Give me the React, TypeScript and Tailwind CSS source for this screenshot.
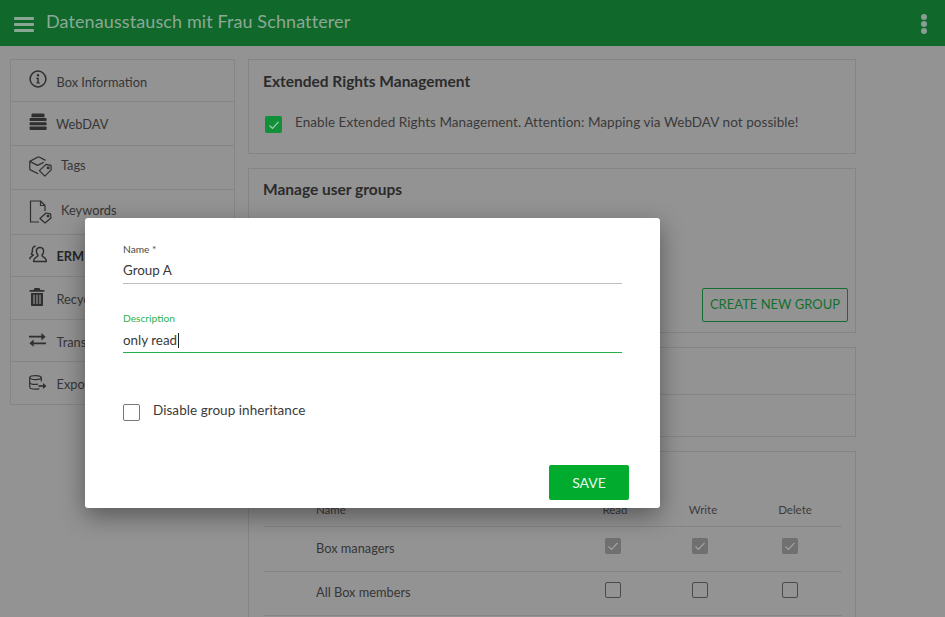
import React from "react";

const ink = "#2f2f2f";

function InfoIcon() {
  return (
    <svg width="18" height="18" viewBox="0 0 18 18" fill="none">
      <circle cx="9" cy="9" r="7.9" stroke={ink} strokeWidth="1.5" />
      <circle cx="9" cy="5.3" r="1.2" fill={ink} />
      <path d="M7.3 7.8H9.8V12.4H11V13.5H7.2V12.4H8.3V8.9H7.3Z" fill={ink} />
    </svg>
  );
}
function StackIcon() {
  return (
    <svg width="18" height="18" viewBox="0 0 18 18" fill={ink}>
      <path d="M2.5 1.6Q2.5 .4 4 .4H14Q15.5 .4 15.5 1.6V4.2H2.5Z" />
      <rect x="0.6" y="5" width="17" height="3" rx=".8" />
      <rect x="0.6" y="9.2" width="17" height="3" rx=".8" />
      <rect x="0.6" y="13.4" width="17" height="3.6" rx=".8" />
    </svg>
  );
}
function TagsIcon() {
  return (
    <svg width="23" height="21" viewBox="0 0 23 21" fill="none" stroke={ink} strokeWidth="1.2" strokeLinejoin="round">
      <path d="M9.5 .8L.8 5.4V13.6L9.2 17.8" />
      <path d="M.8 5.4L8.6 9.4L14.8 6.2" />
      <path d="M9.5 .8L16.6 4.4" />
      <path d="M10.4 14.6L17 8.4L22 9.4L22.2 13.8L15.8 20.2Z" />
      <circle cx="19.2" cy="11.8" r=".9" />
    </svg>
  );
}
function DocTagIcon() {
  return (
    <svg width="23" height="24" viewBox="0 0 23 24" fill="none" stroke={ink} strokeWidth="1.2" strokeLinejoin="round">
      <path d="M10 22H1.5V1H11.5L16 5.5V11" />
      <path d="M11.5 1V5.5H16" />
      <path d="M11 18.5L17 13L21.5 13.8L22 18L16 23Z" />
      <circle cx="19" cy="16" r=".9" />
    </svg>
  );
}
function PeopleIcon() {
  return (
    <svg width="18" height="18" viewBox="0 0 19 18" fill="none" stroke={ink} strokeWidth="1.5" strokeLinejoin="round">
      <path d="M7 .9C4.6.9 3.6 2.6 3.6 4.8C3.6 7 3.2 8.2 2.5 9.2L4.6 10.2C3 11 1.2 12 .8 14.5" />
      <path d="M11.6 2.2C9.2 2.2 7.8 4 7.8 6.2C7.8 8 8.6 9.4 9.5 10.2C9.5 11.2 8.8 11.8 7.6 12.4C6.2 13.1 5 14.2 4.8 17H18.4C18.2 14.2 17 13.1 15.6 12.4C14.4 11.8 13.7 11.2 13.7 10.2C14.6 9.4 15.4 8 15.4 6.2C15.4 4 14 2.2 11.6 2.2Z" />
    </svg>
  );
}
function TrashIcon() {
  return (
    <svg width="16" height="18" viewBox="0 0 16 18" fill={ink}>
      <path d="M5.6 0H10.4L11.4 2H15.4V3.8H.6V2H4.6Z" />
      <path d="M2 5H14V17C14 17.6 13.6 18 13 18H3C2.4 18 2 17.6 2 17ZM4.4 6.8V16H5.6V6.8ZM7.4 6.8V16H8.6V6.8ZM10.4 6.8V16H11.6V6.8Z" fillRule="evenodd" />
    </svg>
  );
}
function SwapIcon() {
  return (
    <svg width="17" height="14" viewBox="0 0 17 14" fill={ink}>
      <path d="M0 3.4H12.4V.6L16.6 4.4L12.4 8V5.2H0Z" transform="translate(0 -.6)" />
      <path d="M17 10.6H4.6V7.8L.4 11.4L4.6 15V12.4H17Z" transform="translate(0 -1.2)" />
    </svg>
  );
}
function DbExportIcon() {
  return (
    <svg width="18" height="15" viewBox="0 0 18 15" fill="none" stroke={ink} strokeWidth="1.2">
      <ellipse cx="6.5" cy="2.6" rx="5.8" ry="2" />
      <path d="M.7 2.6V12C.7 13.2 3.2 14.2 6.5 14.2C8 14.2 9.4 14 10.4 13.6" />
      <path d="M.7 7.2C.7 8.4 3.2 9.4 6.5 9.4C7.4 9.4 8.2 9.3 9 9.2" />
      <path d="M12.3 2.6V6.5" />
      <path d="M9.5 11H16.5" strokeWidth="1.6" />
      <path d="M14 8L17.3 11L14 14Z" fill={ink} stroke="none" />
    </svg>
  );
}

function SideRow({ icon, label, bold, iconClass, labelClass, rowClass }: { icon: React.ReactNode; label: string; bold?: boolean; iconClass: string; labelClass: string; rowClass: string }) {
  return (
    <div className={`flex border-b border-[#858585] last:border-b-0 pl-[18px] ${rowClass}`}>
      <div className={iconClass}>{icon}</div>
      <span className={`${labelClass} text-[12.8px] leading-[18px] ${bold ? "font-bold text-[#262626]" : "text-[#363636]"}`}>{label}</span>
    </div>
  );
}

function Check({ checked }: { checked?: boolean }) {
  return checked ? (
    <span className="mb-[6px] flex h-4 w-4 items-center justify-center rounded-[2px] bg-[#707070]">
      <svg width="12" height="12" viewBox="0 0 12 12" fill="none" stroke="#a3a3a3" strokeWidth="1.2"><path d="M1.5 6.5L4.5 9.5L10.5 2.8" /></svg>
    </span>
  ) : (
    <span className="mb-[6px] block h-4 w-4 rounded-[2px] border border-[#4a4a4a]" />
  );
}

function TableRow({ name, checked }: { name: string; checked?: boolean }) {
  return (
    <div className="grid h-[44.5px] grid-cols-[304px_90px_84px_100px] items-center border-b border-[#858585] text-[12.8px] text-[#363636]">
      <span className="pl-[52px] pb-[1px]">{name}</span>
      <span className="flex justify-center"><Check checked={checked} /></span>
      <span className="flex justify-center"><Check checked={checked} /></span>
      <span className="flex justify-center pr-[4px]"><Check checked={checked} /></span>
    </div>
  );
}

export default function App() {
  return (
    <div className="relative h-[617px] w-[945px] overflow-hidden bg-[#939393] font-['Lato','Noto_Sans',sans-serif]">
      <header className="flex h-[45.5px] items-center bg-[#10682b] pl-[14px] pr-[18px]">
        <div className="flex w-[20px] flex-col gap-[3px] pt-[3px]">
          <span className="h-[3px] rounded-[1px] bg-[#8aa796]" />
          <span className="h-[3px] rounded-[1px] bg-[#8aa796]" />
          <span className="h-[3px] rounded-[1px] bg-[#8aa796]" />
        </div>
        <h1 className="ml-[12px] pb-[2px] text-[18px] font-normal tracking-[0.1px] text-[#8ca896]">Datenausstausch mit Frau Schnatterer</h1>
        <div className="ml-auto flex flex-col gap-[1px] pt-[3px]">
          <span className="h-[6px] w-[6px] rounded-full bg-[#8b9d92]" />
          <span className="h-[6px] w-[6px] rounded-full bg-[#8b9d92]" />
          <span className="h-[6px] w-[6px] rounded-full bg-[#8b9d92]" />
        </div>
      </header>

      <main className="flex items-start gap-[13px] pl-[10px] pt-[13.5px]">
        <nav className="w-[225px] border border-[#858585]">
          <SideRow rowClass="h-[42px]" iconClass="pt-[10px]" labelClass="ml-[9.5px] pt-[13px]" icon={<InfoIcon />} label="Box Information" />
          <SideRow rowClass="h-[44px]" iconClass="pt-[11px]" labelClass="ml-[9px] pt-[13px]" icon={<StackIcon />} label="WebDAV" />
          <SideRow rowClass="h-[44px]" iconClass="pt-[10px]" labelClass="ml-[9px] pt-[10px]" icon={<TagsIcon />} label="Tags" />
          <SideRow rowClass="h-[45px]" iconClass="pt-[10px]" labelClass="ml-[9px] pt-[11px]" icon={<DocTagIcon />} label="Keywords" />
          <SideRow rowClass="h-[42px]" iconClass="pt-[10px]" labelClass="ml-[9.5px] pt-[12px]" icon={<PeopleIcon />} label="ERM" bold />
          <SideRow rowClass="h-[43px]" iconClass="pt-[11px]" labelClass="ml-[11.5px] pt-[13px]" icon={<TrashIcon />} label="Recycle bin" />
          <SideRow rowClass="h-[42px]" iconClass="pt-[13px]" labelClass="ml-[10.5px] pt-[13px]" icon={<SwapIcon />} label="Transfer" />
          <SideRow rowClass="h-[42px]" iconClass="pt-[13px]" labelClass="ml-[9.5px] pt-[13px]" icon={<DbExportIcon />} label="Export" />
        </nav>

        <section className="flex w-[608px] flex-col gap-[14px]">
          <div className="h-[95px] border border-[#858585] px-[14px] pt-[11px]">
            <h2 className="text-[15.5px] font-bold leading-[20px] text-[#2b2b2b]">Extended Rights Management</h2>
            <div className="mt-[14px] flex">
              <span className="ml-[2px] mt-[11px] flex h-[17px] w-[17px] items-center justify-center rounded-[2px] bg-[#109038]">
                <svg width="12" height="12" viewBox="0 0 12 12" fill="none" stroke="#a9c9b2" strokeWidth="1.2"><path d="M1.5 6.5L4.5 9.5L10.5 2.8" /></svg>
              </span>
              <span className="ml-[13px] mt-[8px] text-[13.5px] leading-[18px] tracking-[0.06px] text-[#3a3a3a]">Enable Extended Rights Management. Attention: Mapping via WebDAV not possible!</span>
            </div>
          </div>

          <div className="flex h-[165px] flex-col border border-[#858585] px-[14px] pt-[10px]">
            <h2 className="text-[15.5px] font-bold leading-[20px] text-[#2b2b2b]">Manage user groups</h2>
            <button className="ml-auto mr-[-7px] mt-[89px] flex h-[34px] w-[146px] items-center justify-center rounded-[2px] border border-[#136f30] text-[13px] text-[#136f30]">CREATE NEW GROUP</button>
          </div>

          <div className="h-[90px] border border-[#858585]">
            <div className="h-[47px] border-b border-[#858585]" />
          </div>

          <div className="h-[200px] border border-[#858585] pl-[15px] pr-[13px] pt-[50px]">
            <div className="grid h-[25px] grid-cols-[304px_90px_84px_100px] items-start border-b border-[#858585] text-[11.5px] leading-[16px] text-[#3c3c3c]">
              <span className="pl-[52px]">Name</span>
              <span className="pl-[4px] text-center">Read</span>
              <span className="pl-[6px] text-center">Write</span>
              <span className="pl-[6px] text-center">Delete</span>
            </div>
            <TableRow name="Box managers" checked />
            <TableRow name="All Box members" />
          </div>
        </section>
      </main>

      <div className="absolute left-[85px] top-[218px] flex h-[290px] w-[575px] flex-col rounded-[3px] bg-white px-[38px] shadow-[0_8px_24px_rgba(0,0,0,0.4)]">
        <label className="mt-[25px] text-[10.2px] leading-[13px] text-[#4a4a4a]">Name *</label>
        <div className="flex h-[28px] w-[499px] items-center border-b border-[#bdbdbd] pt-[2px] text-[13.4px] text-[#3a3a3a]">Group A</div>
        <label className="mt-[28px] text-[10.2px] leading-[13px] text-[#2fb14e]">Description</label>
        <div className="flex h-[28px] w-[499px] items-center border-b border-[#24b04a] pt-[4px] text-[13.4px] text-[#3a3a3a]">
          only read<span className="ml-[1px] inline-block h-[15px] w-px bg-[#222]" />
        </div>
        <div className="mt-[49px] flex items-start">
          <span className="mt-[2px] block h-[17px] w-[17px] rounded-[2px] border border-[#777]" />
          <span className="ml-[13px] text-[13.5px] leading-[16px] tracking-[0.05px] text-[#3a3a3a]">Disable group inheritance</span>
        </div>
        <button className="ml-auto mr-[-7px] mt-[44px] flex h-[35px] w-[80px] items-center justify-center rounded-[2px] bg-[#00ab2e] text-[14px] text-[#e6f7ea]">SAVE</button>
      </div>
    </div>
  );
}
